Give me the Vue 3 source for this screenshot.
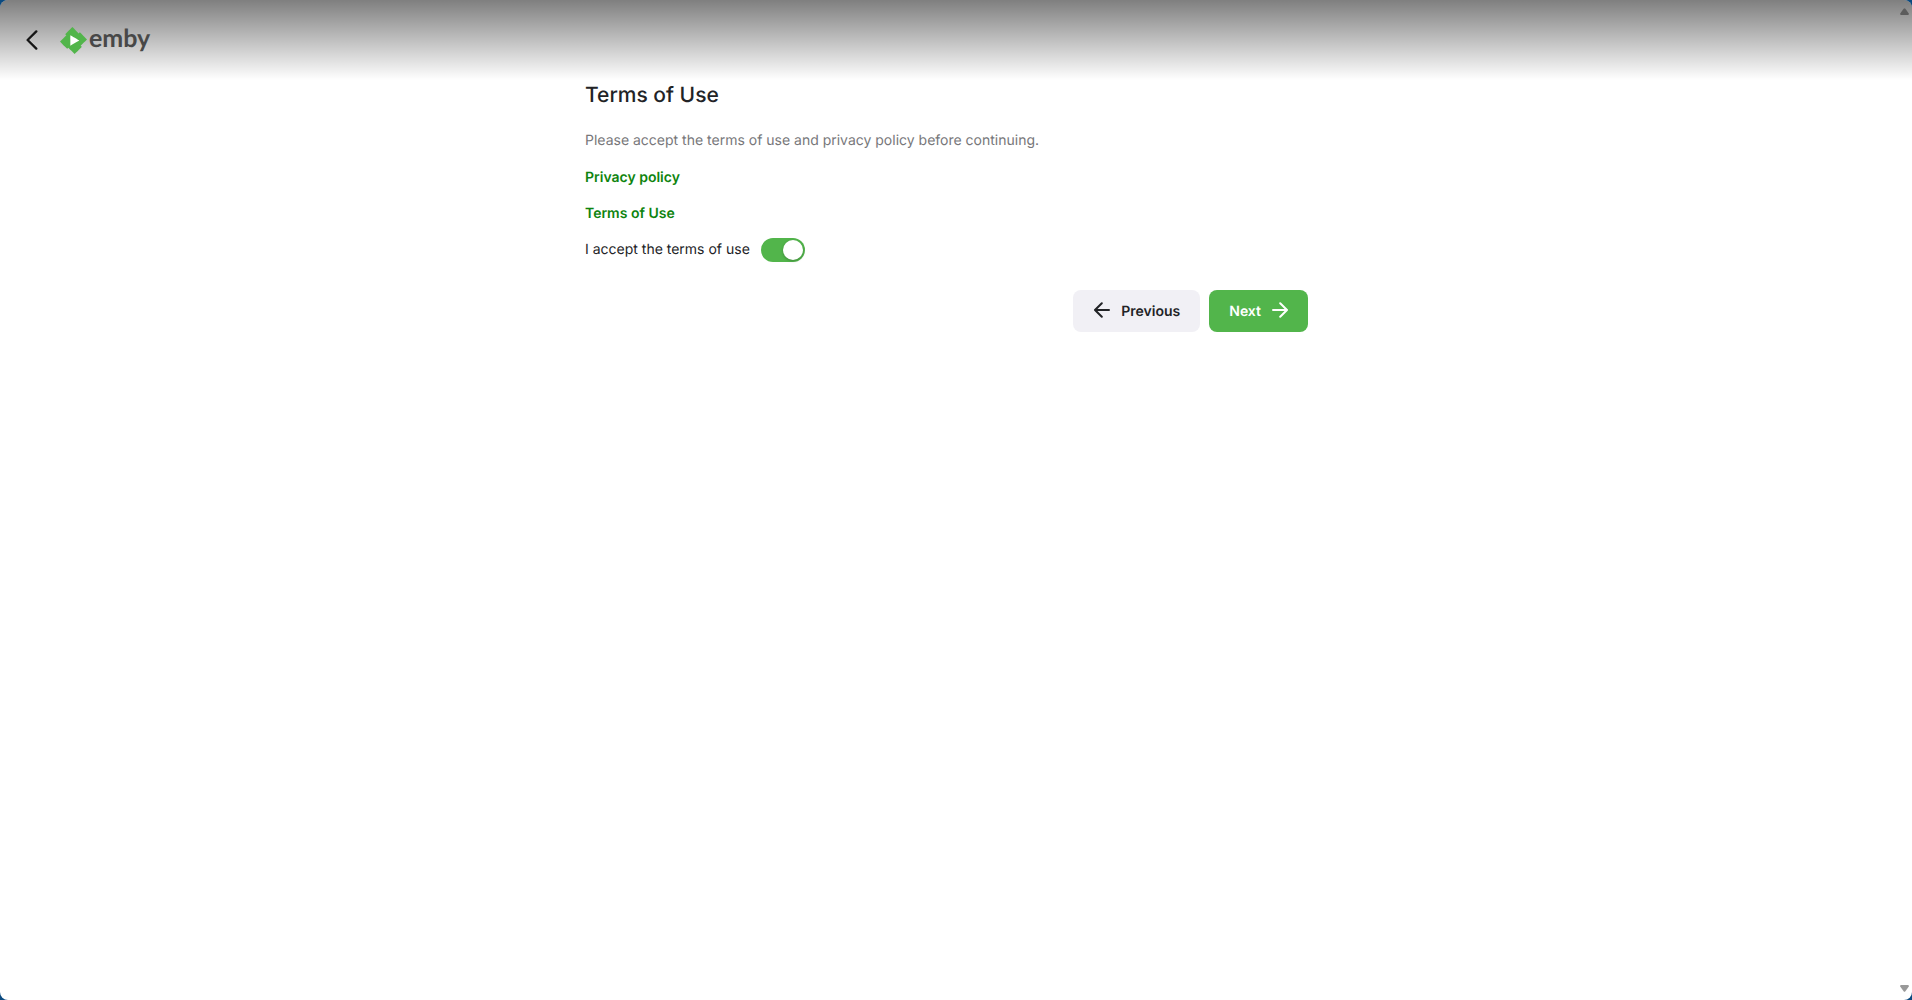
<script setup>
import { ref } from 'vue'

const accepted = ref(true)
</script>

<template>
  <div class="window">
    <header class="header">
      <button class="back" type="button" aria-label="Back">
        <svg width="12" height="20" viewBox="0 0 12 20" aria-hidden="true">
          <path d="M10.3 1.4L1.6 10l8.7 8.6" />
        </svg>
      </button>
      <a class="logo" href="#" aria-label="emby">
        <svg width="27" height="27" viewBox="0 0 24 24" aria-hidden="true">
          <path fill="#fff" d="M8 6h9v11H8z" />
          <path
            fill="#52b54b"
            d="M11.041 0c-.007 0-1.456 1.43-3.219 3.176L4.615 6.352l.512.513.512.512-2.819 2.791L0 12.961l1.83 1.848c1.006 1.016 2.438 2.46 3.182 3.209l1.351 1.359.508-.496c.28-.273.515-.498.524-.498.008 0 1.266 1.264 2.794 2.808L12.97 24l.187-.182c.23-.225 5.007-4.95 5.717-5.656l.52-.516-.502-.513c-.276-.282-.5-.52-.496-.53.003-.009 1.264-1.26 2.802-2.783 1.538-1.522 2.8-2.776 2.803-2.785.005-.012-3.617-3.684-6.107-6.193L17.65 4.6l-.505.505c-.279.278-.517.501-.53.497-.013-.005-1.27-1.267-2.793-2.805A449.655 449.655 0 0011.041 0zM9.223 7.367c.091.038 7.951 4.608 7.957 4.627.003.013-1.781 1.056-3.965 2.32a999.898 999.898 0 01-3.996 2.307c-.019.006-.026-1.266-.026-4.629 0-3.7.007-4.634.03-4.625Z"
          />
        </svg>
        <span>emby</span>
      </a>
    </header>

    <main class="content">
      <h1>Terms of Use</h1>
      <p class="intro">Please accept the terms of use and privacy policy before continuing.</p>
      <a class="link" href="#">Privacy policy</a>
      <a class="link" href="#">Terms of Use</a>
      <label class="accept" for="accept-terms">
        <span>I accept the terms of use</span>
        <input id="accept-terms" v-model="accepted" class="toggle" type="checkbox" />
      </label>
      <div class="actions">
        <button class="btn" type="button">
          <svg width="18" height="18" viewBox="0 0 18 18" aria-hidden="true">
            <path d="M16 8H2.400M8.800 1.200L2 8l6.800 6.800" />
          </svg>
          <span>Previous</span>
        </button>
        <button class="btn btn-next" type="button">
          <span>Next</span>
          <svg width="18" height="18" viewBox="0 0 18 18" aria-hidden="true">
            <path d="M2 8h13.600M9.200 1.200L16 8l-6.800 6.800" />
          </svg>
        </button>
      </div>
    </main>

    <div class="scrollbar" aria-hidden="true">
      <svg class="up" width="9" height="7" viewBox="0 0 9 7">
        <path d="M3.600.8Q4.500-.4 5.400.8L8.800 5.500Q9 7 8 7H1Q0 7 .2 5.500z" />
      </svg>
      <svg class="down" width="9" height="7" viewBox="0 0 9 7">
        <path d="M3.600 6.200Q4.500 7.400 5.400 6.200L8.800 1.500Q9 0 8 0H1Q0 0 .2 1.500z" />
      </svg>
    </div>
  </div>
</template>

<style>
body {
  margin: 0;
  background: #0b4a80;
}
</style>

<style scoped>
.window {
  position: relative;
  box-sizing: border-box;
  min-height: 100vh;
  padding-right: 19px;
  border-radius: 8px;
  overflow: hidden;
  background: #fff;
  color: #222326;
  font-family: Inter, "Liberation Sans", sans-serif;
  font-size: 14px;
  line-height: 20px;
  text-rendering: geometricPrecision;
}

.header {
  display: flex;
  align-items: center;
  gap: 16px;
  box-sizing: border-box;
  height: 80px;
  margin-right: -19px;
  padding-left: 20px;
  background: linear-gradient(rgba(0, 0, 0, 0.5), rgba(0, 0, 0, 0));
}

.back {
  display: flex;
  align-items: center;
  justify-content: center;
  width: 24px;
  height: 32px;
  padding: 0;
  border: 0;
  background: none;
}

.back path {
  fill: none;
  stroke: #161616;
  stroke-width: 2.3;
  stroke-linecap: round;
  stroke-linejoin: round;
}

.logo {
  display: flex;
  align-items: center;
  gap: 2px;
  color: #484848;
  font-family: Lato, "Open Sans", sans-serif;
  font-size: 25px;
  font-weight: 700;
  line-height: 32px;
  text-decoration: none;
}

.logo span {
  padding-bottom: 4px;
}

.content {
  display: flex;
  flex-direction: column;
  align-items: flex-start;
  max-width: 723px;
  margin: 0 auto;
}

h1 {
  margin: 0;
  font-size: 21px;
  font-weight: 500;
  line-height: 32px;
}

.intro {
  margin: 19px 0 17px;
  color: #77777a;
}

.link {
  margin-bottom: 16px;
  color: #0e840e;
  font-weight: 600;
  text-decoration: none;
}

.accept {
  display: flex;
  align-items: center;
  gap: 11px;
  height: 20px;
}

.toggle {
  appearance: none;
  display: flex;
  box-sizing: border-box;
  width: 44px;
  height: 24px;
  margin: 0;
  padding: 2px;
  border-radius: 12px;
  background: #c8c8cc;
}

.toggle::before {
  content: "";
  width: 20px;
  height: 20px;
  border-radius: 50%;
  background: #fff;
  box-shadow: 0 1px 3px rgba(0, 0, 0, 0.25);
}

.toggle:checked {
  justify-content: flex-end;
  background: #52b54b;
}

.actions {
  display: flex;
  align-self: flex-end;
  gap: 9px;
  margin-top: 30px;
}

.btn {
  display: flex;
  align-items: center;
  gap: 10px;
  height: 42px;
  padding: 0 20px;
  border: 0;
  border-radius: 8px;
  background: #f1f0f5;
  color: #222326;
  font: 600 14px/20px Inter, "Liberation Sans", sans-serif;
  text-rendering: inherit;
}

.btn span {
  padding-top: 2px;
}

.btn svg {
  fill: none;
  stroke: currentColor;
  stroke-width: 2;
  stroke-linecap: round;
  stroke-linejoin: round;
}

.btn-next {
  padding-right: 19px;
  background: #52b54b;
  color: #fff;
}

.scrollbar {
  position: absolute;
  top: 8px;
  right: 3px;
  bottom: 8px;
  display: flex;
  flex-direction: column;
  justify-content: space-between;
}

.up {
  fill: #5c5c5c;
}

.down {
  fill: #999;
}
</style>
